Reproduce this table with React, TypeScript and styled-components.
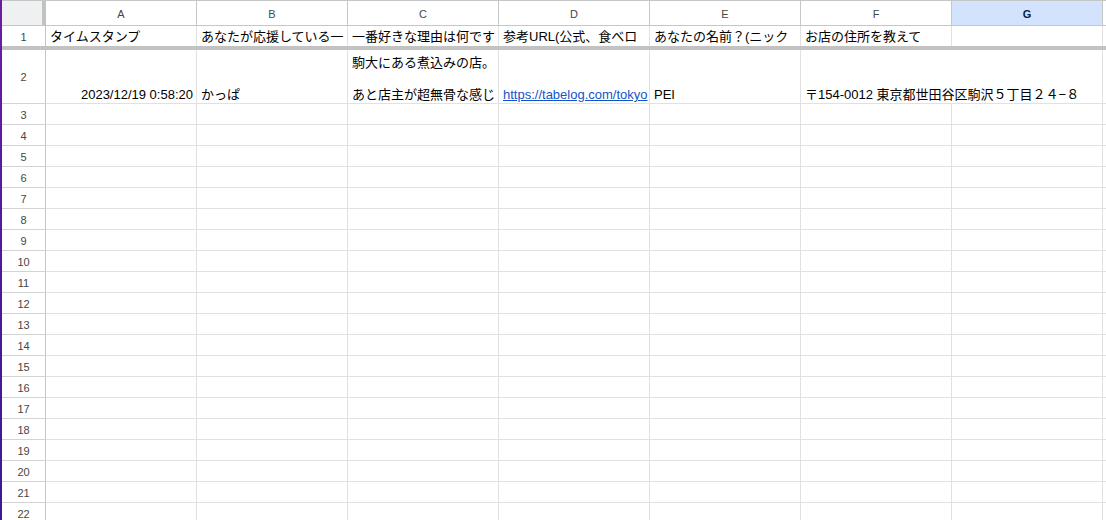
import styled, { createGlobalStyle } from "styled-components";

const COLS = "44px repeat(7, 151px) 1fr";
const LETTERS = ["A", "B", "C", "D", "E", "F", "G"];

const GlobalStyle = createGlobalStyle`
  html, body {
    margin: 0;
    padding: 0;
    background: #fff;
    overflow: hidden;
  }
  body {
    font-family: "Liberation Sans", Arial, "Noto Sans CJK JP", sans-serif;
  }
`;

const Page = styled.div`
  display: flex;
  height: 520px;
  overflow: hidden;
`;

const Edge = styled.div`
  width: 2px;
  flex: none;
  background: linear-gradient(#6d1d9e, #4a1a93 60%, #3a1c8c);
`;

const Sheet = styled.div`
  flex: 1;
  display: flex;
  flex-direction: column;
  border-top: 1px solid #c4c7c5;
`;

const Row = styled.div<{ $h: number }>`
  display: grid;
  grid-template-columns: ${COLS};
  height: ${(p) => p.$h}px;
  flex: none;
`;

const Corner = styled.div`
  background: #eef0f1;
  border-right: 4px solid #c2c2c2;
  border-bottom: 1px solid #c4c7c5;
`;

const ColHeader = styled.div<{ $selected?: boolean }>`
  display: flex;
  align-items: center;
  justify-content: center;
  padding-top: 1px;
  font-size: 11px;
  color: ${(p) => (p.$selected ? "#041e49" : "#444746")};
  font-weight: ${(p) => (p.$selected ? 700 : 400)};
  background: ${(p) => (p.$selected ? "#d3e3fd" : "#fff")};
  border-right: 1px solid #c4c7c5;
  border-bottom: 1px solid #c4c7c5;
`;

const RowHeader = styled.div<{ $open?: boolean }>`
  display: flex;
  align-items: center;
  justify-content: center;
  padding-top: 1px;
  font-size: 11px;
  color: #444746;
  background: #fff;
  border-right: 1px solid #c4c7c5;
  border-bottom: ${(p) => (p.$open ? "none" : "1px solid #d3d3d3")};
`;

const Cell = styled.div<{
  $align?: "left" | "right";
  $valign?: "center" | "bottom";
  $spill?: boolean;
  $wrap?: boolean;
  $open?: boolean;
}>`
  display: flex;
  min-width: 0;
  padding: 1px 3px 0 4px;
  box-sizing: border-box;
  font-size: 13px;
  line-height: 16px;
  color: #000;
  justify-content: ${(p) => (p.$align === "right" ? "flex-end" : "flex-start")};
  align-items: ${(p) => (p.$valign === "bottom" ? "flex-end" : "center")};
  white-space: ${(p) => (p.$wrap ? "pre-wrap" : "nowrap")};
  overflow: ${(p) => (p.$spill ? "visible" : "hidden")};
  border-right: ${(p) => (p.$spill ? "none" : "1px solid #e1e1e1")};
  border-bottom: ${(p) => (p.$open ? "none" : "1px solid #e1e1e1")};
`;

const FreezeBar = styled.div`
  height: 4px;
  flex: none;
  background: #c2c2c2;
`;

const LinkText = styled.span`
  color: #1155cc;
  text-decoration: underline;
`;

const row1 = [
  "タイムスタンプ",
  "あなたが応援している一",
  "一番好きな理由は何です",
  "参考URL(公式、食べロ",
  "あなたの名前？(ニック",
  "お店の住所を教えて",
  "",
];

export default function App() {
  const empty = Array.from({ length: 20 }, (_, i) => i + 3);
  return (
    <>
      <GlobalStyle />
      <Page>
        <Edge />
        <Sheet>
          <Row $h={25}>
            <Corner />
            {LETTERS.map((l) => (
              <ColHeader key={l} $selected={l === "G"}>
                {l}
              </ColHeader>
            ))}
            <ColHeader />
          </Row>

          <Row $h={20}>
            <RowHeader $open>1</RowHeader>
            {row1.map((t, i) => (
              <Cell key={i} $open>
                {t}
              </Cell>
            ))}
            <Cell $open />
          </Row>
          <FreezeBar />

          <Row $h={54}>
            <RowHeader>2</RowHeader>
            <Cell $align="right" $valign="bottom">
              2023/12/19 0:58:20
            </Cell>
            <Cell $valign="bottom">かっぱ</Cell>
            <Cell $valign="bottom" $wrap>
              {"駒大にある煮込みの店。\n\nあと店主が超無骨な感じ"}
            </Cell>
            <Cell $valign="bottom">
              <LinkText>https://tabelog.com/tokyo</LinkText>
            </Cell>
            <Cell $valign="bottom">PEI</Cell>
            <Cell $valign="bottom" $spill>
              〒154-0012 東京都世田谷区駒沢５丁目２４−８
            </Cell>
            <Cell />
            <Cell />
          </Row>

          {empty.map((n) => (
            <Row key={n} $h={21}>
              <RowHeader>{n}</RowHeader>
              {LETTERS.map((l) => (
                <Cell key={l} />
              ))}
              <Cell />
            </Row>
          ))}
        </Sheet>
      </Page>
    </>
  );
}
